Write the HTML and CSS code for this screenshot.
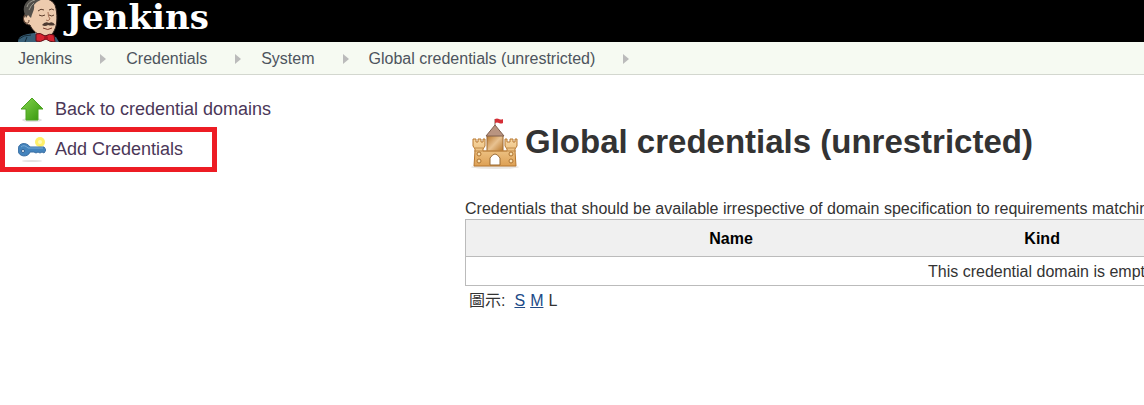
FILE: index.html
```html
<!DOCTYPE html>
<html lang="zh-Hant">
<head>
<meta charset="utf-8">
<title>Global credentials (unrestricted) [Jenkins]</title>
<link rel="stylesheet" href="styles.css">
</head>
<body>
<header class="header">
  <a class="brand" href="#">
    <svg class="brand-face" viewBox="0 0 42 42" aria-hidden="true">
      <path d="M0 42C0 37 4 35 10 34L16 33 29 35 38 37 41 42Z" fill="#385f77"/>
      <path d="M1 39Q5 35 13 35M7 42l2-5M32 37l4 5" stroke="#162b38" fill="none"/>
      <path d="M17 31L20 42H37L34 35Z" fill="#eef0e9"/>
      <path d="M7 7C9-3 31-6 37 5C40 14 39 25 37 29C35 34 32 37 27 36C20 36 14 30 12 25C7 25 4 21 6 17C6 14 8 13 9 14Z" fill="#edcbae" stroke="#33251f"/>
      <path d="M7 15C3 6 9-1 16-2H30C24-1 19 1 16 5C17 10 14 13 13 18L10 15 8 18Z" fill="#53504b"/>
      <path d="M9 7C10 3 13 1 17 0M11 10Q13 5 16 3" stroke="#9c9a8e" fill="none"/>
      <path d="M9 16C5 14 4 20 8 23Q11 24 11 20M20 11q3-3 6-1M31 10q3-2 5 0M21 15q3 2 6 0M31 15q3 2 5 0" stroke="#5c3e2d" fill="none"/>
      <path d="M30 12q0 5 2 7q-2 3-4 1" stroke="#a56f55" fill="none"/>
      <path d="M24 25Q27 21 31 23Q35 21 37 25Q33 26 30 25Q27 27 24 25Z" fill="#4d3a31"/>
      <path d="M25 28Q30 31 34 28" stroke="#7b3d30" fill="none"/>
      <path d="M18 34Q22 32 27 36Q32 33 36 35L37 42Q31 42 28 39Q22 43 18 41Z" fill="#d62330" stroke="#5f1118"/>
      <circle cx="28" cy="38" r="2" fill="#a71220"/>
    </svg>
    <span class="brand-name">Jenkins</span>
  </a>
</header>
<nav class="crumbs" aria-label="Breadcrumb">
  <a class="crumb" href="#">Jenkins</a>
  <a class="crumb" href="#">Credentials</a>
  <a class="crumb" href="#">System</a>
  <a class="crumb" href="#">Global credentials (unrestricted)</a>
</nav>
<div class="page">
  <nav class="side" aria-label="Tasks">
    <a class="task" href="#">
      <svg class="task-icon" viewBox="0 0 28 28" aria-hidden="true">
        <defs><linearGradient id="leaf" x2="1" y2="1"><stop stop-color="#85d54e"/><stop offset="1" stop-color="#33940b"/></linearGradient></defs>
        <ellipse cx="14" cy="25" rx="10" ry="2" fill="#e2e2e2"/>
        <path d="M14 3L25 14H20V25H8V14H3Z" fill="url(#leaf)" stroke="#4ba31f" stroke-linejoin="round"/>
      </svg>
      <span>Back to credential domains</span>
    </a>
    <a class="task task-marked" href="#">
      <svg class="task-icon" viewBox="0 0 28 28" aria-hidden="true">
        <ellipse cx="14" cy="26" rx="10" ry="1" fill="#e2e2e2"/>
        <circle cx="22" cy="7" r="5" fill="#fff06a"/><circle cx="22" cy="7" r="2" fill="#fff9b6"/>
        <path d="M0 15C0 7 9 7 12 12H26L28 15 26 18 24 17 22 18 20 17 18 18 16 17H12C10 23 0 22 0 15Z" fill="#4484bd" stroke="#3a6ea3"/>
        <path d="M3 12Q6 9 10 13H25" stroke="#78aad6" fill="none"/>
        <circle cx="5" cy="16" r="1.500" fill="#fff" stroke="#315f91"/>
      </svg>
      <span>Add Credentials</span>
    </a>
  </nav>
  <main class="main">
    <h1 class="title">
      <svg class="title-icon" viewBox="-2 -4 56 56" aria-hidden="true">
        <defs><linearGradient id="stone" x2="0" y2="1"><stop stop-color="#f8d9a4"/><stop offset="1" stop-color="#dda054"/></linearGradient>
        <linearGradient id="tower" x2="1" y2="1"><stop stop-color="#b8762c"/><stop offset=".5" stop-color="#e8c291"/><stop offset="1" stop-color="#b77325"/></linearGradient></defs>
        <ellipse cx="28" cy="49" rx="24" ry="2" fill="#e9e6e2"/>
        <path d="M28 1V12" stroke="#845a4d"/><path d="M28 1Q30 0 32 1T36 1V5Q34 6 32 5T28 5Z" fill="#d52e36"/>
        <path d="M20 17H36V34H20Z" fill="url(#tower)" stroke="#a06a31"/>
        <path d="M28 7L37 18H19Z" fill="#b99480" stroke="#80604e"/>
        <path d="M6 21H9V24H11V21H14V24H16V21H18V28L16 31V33H40V31L38 28V21H40V24H43V21H46V24H48V21H50V28L48 31V33L49 48H7L8 33V31L6 28Z" fill="url(#stone)" stroke="#b7772e"/>
        <path d="M7 33H49M8 30H16M40 30H48" stroke="#c08a48" fill="none"/>
        <path d="M23 47V40Q28 32 33 40V47Z" fill="#fff" stroke="#9a6b33"/>
        <g fill="#f8e1b6" stroke="#ad722d"><circle cx="12" cy="36" r="2"/><circle cx="44" cy="36" r="2"/><circle cx="12" cy="43" r="2"/><circle cx="44" cy="43" r="2"/></g>
      </svg>
      <span>Global credentials (unrestricted)</span>
    </h1>
    <p class="intro">Credentials that should be available irrespective of domain specification to requirements matching.</p>
    <table class="grid">
      <thead><tr><th class="col-name" scope="col">Name</th><th class="col-kind" scope="col">Kind</th><th></th></tr></thead>
      <tbody><tr><td colspan="3">This credential domain is empty.</td></tr></tbody>
    </table>
    <div class="sizes"><span class="sizes-label">圖示:</span><a href="#">S</a><a href="#">M</a><span>L</span></div>
  </main>
</div>
</body>
</html>
```
FILE: styles.css
```css
* { box-sizing: border-box; }
body {
  margin: 0;
  background: #fff;
  color: #333;
  font: 16px/20px "Liberation Sans", "Noto Sans CJK TC", Arial, sans-serif;
}
.header { background: #000; height: 42px; padding-left: 18px; }
.brand { display: inline-flex; gap: 6px; color: #fff; text-decoration: none; }
.brand-face { width: 42px; height: 42px; }
.brand-name { font: bold 34px/34px "DejaVu Serif", Georgia, serif; }
.crumbs {
  display: flex;
  padding: 7px 18px 5px;
  background: #f6faf2;
  border-bottom: 1px solid #d3d7cf;
}
.crumb { display: flex; align-items: center; color: #4d545d; text-decoration: none; white-space: nowrap; }
.crumb::after {
  content: "";
  margin: 0 20px 0 28px;
  border: 5px solid transparent;
  border-left: 6px solid #bbb;
  border-right: 0;
}
.page { display: flex; }
.side { flex: 0 0 465px; padding-top: 14px; }
.task {
  display: flex;
  align-items: center;
  gap: 9px;
  width: fit-content;
  padding: 6px 18px;
  color: #4b3758;
  font-size: 18px;
  text-decoration: none;
}
.task-icon { width: 28px; height: 28px; }
.task-marked { margin-top: -2px; padding: 3px 29px 4px 13px; border: 5px solid #ed1c24; }
.main { flex: 1; min-width: 0; overflow: hidden; padding-top: 39px; }
.title { display: flex; align-items: center; gap: 4px; margin: 0; font-size: 33px; line-height: 56px; white-space: nowrap; }
.title-icon { width: 56px; height: 56px; }
.intro { margin: 29px 0 0; white-space: nowrap; }
.grid { width: 170%; border: 1px solid #bbb; border-collapse: collapse; table-layout: fixed; }
.grid th { padding: 9px 8px 7px; background: #f0f0f0; color: #000; text-align: center; }
.grid td { padding: 5px 4px 3px; border-top: 1px solid #bbb; text-align: center; }
.col-name { width: 46%; }
.col-kind { width: 8%; }
.sizes { display: flex; gap: 5px; padding: 5px 4px; }
.sizes-label { margin-right: 4px; }
.sizes a { color: #204a87; }
```
